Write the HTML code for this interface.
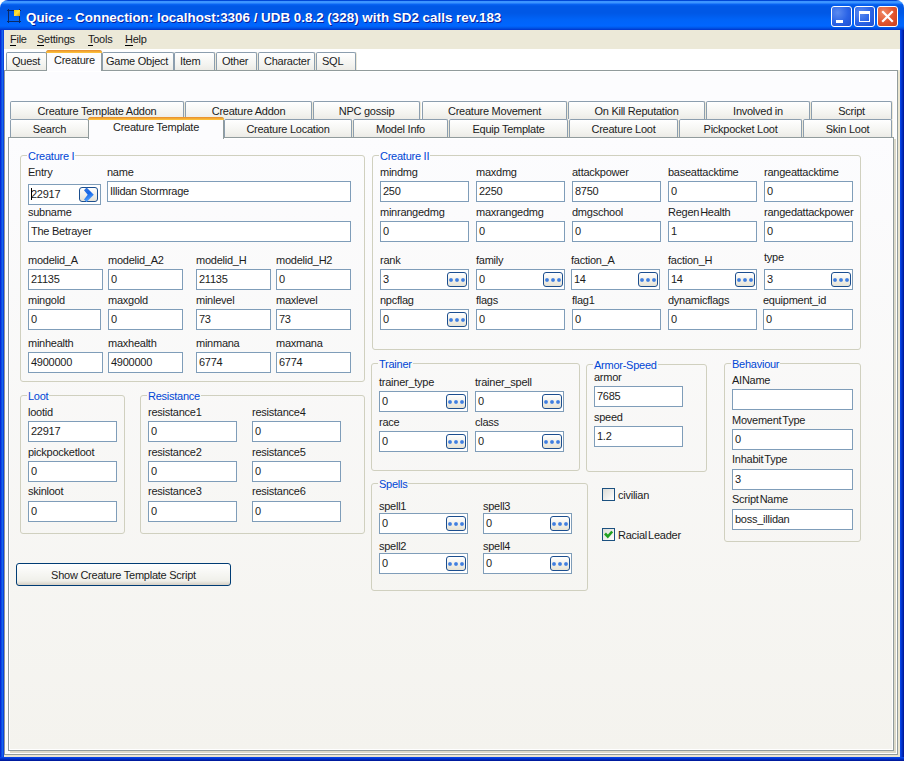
<!DOCTYPE html><html><head><meta charset="utf-8"><style>
*{margin:0;padding:0;box-sizing:border-box}
html,body{width:904px;height:761px;overflow:hidden;background:#FFFFFF}
body{position:relative;font-family:"Liberation Sans",sans-serif;font-size:11px;color:#1C1C1C}
div,i,b,span{position:absolute;display:block}
.lbl{line-height:13px;white-space:nowrap;letter-spacing:-0.25px}
.tb{background:#fff;border:1px solid #7F9DB9}
.tb span{left:2px;line-height:13px;white-space:nowrap;letter-spacing:-0.25px}
.db{width:20px;height:15px;border:1px solid #1C4E8E;border-radius:3px;background:linear-gradient(#fff,#E6E3D6)}
.db b{width:4px;height:4px;border-radius:2px;background:radial-gradient(circle,#3F7EDF 45%,#8FB4EC 100%);top:4.5px}
.db b:nth-child(1){left:0.5px}.db b:nth-child(2){left:6.5px}.db b:nth-child(3){left:12.5px}
.grp{border:1px solid #D0D0BF;border-radius:3px}
.gt{line-height:13px;color:#0046D5;padding:0 1px;white-space:nowrap;letter-spacing:-0.25px}
.tab{box-shadow:1px 0 0 #ECE8D8;border:1px solid #8C9EAE;border-bottom:none;border-radius:2px 2px 0 0;background:linear-gradient(#FFFFFF,#F3F3EF 70%,#ECEBE6);line-height:13px;white-space:nowrap;letter-spacing:-0.25px}
.tab span{width:100%;text-align:center}
.tsel{border:1px solid #919B9C;border-bottom:none;border-radius:3px 3px 0 0;background:#FCFCFE;line-height:13px;white-space:nowrap;letter-spacing:-0.25px}
.tsel:before{content:"";position:absolute;left:-1px;right:-1px;top:-1px;height:3px;background:linear-gradient(#E68B2C,#FFC73C);border-radius:3px 3px 0 0}
em{font-style:normal;padding-left:1px}
.mi{line-height:13px;white-space:nowrap;letter-spacing:-0.25px}
.mi u{text-decoration:none;border-bottom:1px solid #000}
</style></head><body>

<div style="left:0;top:10px;width:904px;height:751px;background:#0831D9"></div>
<div style="left:0;top:10px;width:4px;height:751px;background:linear-gradient(90deg,#0019CF,#166AEE 60%,#0831D9)"></div>
<div style="left:900px;top:10px;width:4px;height:751px;background:linear-gradient(90deg,#0A4AEE,#0030C8 50%,#001490)"></div>
<div style="left:0;top:757px;width:904px;height:4px;background:linear-gradient(#0A4AEE,#0030C8 50%,#001490)"></div>
<div style="left:0;top:0;width:904px;height:30px;border-radius:8px 8px 0 0;background:linear-gradient(#0047D6 0px,#0047D6 1px,#3D95FF 1px,#3D95FF 3px,#0A66F5 4px,#0058E6 6px,#0058E6 13px,#0064F8 20px,#0066FF 26px,#0055E5 28px,#0033CC 30px)"></div>
<div style="left:8px;top:9px;width:1px;height:14px;background:#0A2A66"></div><div style="left:19px;top:9px;width:1px;height:14px;background:#0A2A66"></div><div style="left:7px;top:10px;width:14px;height:1px;background:#0A2A66"></div><div style="left:7px;top:21px;width:14px;height:1px;background:#0A2A66"></div>
<div style="left:14px;top:10px;width:6px;height:6px;background:linear-gradient(135deg,#F8C800,#FFE040 50%,#D89A00)"></div>
<div style="left:26px;top:7px;line-height:22px;font-size:13.4px;font-weight:bold;color:#fff;white-space:nowrap;text-shadow:1px 1px 0 #0A1E9B">Quice - Connection: localhost:3306 / UDB 0.8.2 (328) with SD2 calls rev.183</div>
<div style="left:831px;top:6px;width:21px;height:21px;border:1px solid #fff;border-radius:3px;background:radial-gradient(circle at 30% 30%,#5B8BF0,#2A63E6 55%,#1F4FD0)"></div>
<div style="left:854px;top:6px;width:21px;height:21px;border:1px solid #fff;border-radius:3px;background:radial-gradient(circle at 30% 30%,#5B8BF0,#2A63E6 55%,#1F4FD0)"></div>
<div style="left:877px;top:6px;width:21px;height:21px;border:1px solid #fff;border-radius:3px;background:radial-gradient(circle at 30% 30%,#F08A66,#E0532C 55%,#C8401E)"></div>
<div style="left:836px;top:20px;width:7px;height:3px;background:#fff"></div>
<div style="left:859px;top:11px;width:11px;height:11px;border:1px solid #fff;border-top-width:3px"></div>
<svg style="position:absolute;left:877px;top:6px" width="21" height="21"><path d="M6 6L15 15M15 6L6 15" stroke="#fff" stroke-width="2.2" stroke-linecap="square"/></svg>
<div style="left:4px;top:30px;width:896px;height:19px;background:#ECE9D8"></div>
<div class="mi" style="left:10px;top:33px"><u>F</u>ile</div>
<div class="mi" style="left:37px;top:33px"><u>S</u>ettings</div>
<div class="mi" style="left:88px;top:33px"><u>T</u>ools</div>
<div class="mi" style="left:125px;top:33px"><u>H</u>elp</div>
<div style="left:4px;top:49px;width:896px;height:708px;background:#ECE9D8"></div>
<div style="left:4px;top:49px;width:896px;height:21px;background:#FFFFFF"></div>
<div style="left:4px;top:70px;width:894px;height:685px;border:1px solid #919B9C;background:#FCFCFE;box-shadow:inset 1px 1px #fff,inset -1px -1px #fff,2px 2px 0 #EAE5D0"></div>
<div class="tab" style="left:6px;top:52px;width:41px;height:18px"><span style="left:5px;top:2px;width:auto;text-align:left">Quest</span></div>
<div class="tab" style="left:102px;top:52px;width:72px;height:18px"><span style="left:3px;top:2px;width:auto;text-align:left">Game Object</span></div>
<div class="tab" style="left:174px;top:52px;width:41px;height:18px"><span style="left:5px;top:2px;width:auto;text-align:left">Item</span></div>
<div class="tab" style="left:216px;top:52px;width:41px;height:18px"><span style="left:5px;top:2px;width:auto;text-align:left">Other</span></div>
<div class="tab" style="left:258px;top:52px;width:57px;height:18px"><span style="left:5px;top:2px;width:auto;text-align:left">Character</span></div>
<div class="tab" style="left:316px;top:52px;width:40px;height:18px"><span style="left:5px;top:2px;width:auto;text-align:left">SQL</span></div>
<div class="tsel" style="left:46px;top:50px;width:56px;height:21px"><span style="left:7px;top:3px">Creature</span></div>
<div class="tab" style="left:10px;top:101px;width:174px;height:18px"><span style="top:3px">Creature Template Addon</span></div>
<div class="tab" style="left:185px;top:101px;width:127px;height:18px"><span style="top:3px">Creature Addon</span></div>
<div class="tab" style="left:313px;top:101px;width:107px;height:18px"><span style="top:3px">NPC gossip</span></div>
<div class="tab" style="left:422px;top:101px;width:145px;height:18px"><span style="top:3px">Creature Movement</span></div>
<div class="tab" style="left:568px;top:101px;width:137px;height:18px"><span style="top:3px">On Kill Reputation</span></div>
<div class="tab" style="left:706px;top:101px;width:104px;height:18px"><span style="top:3px">Involved in</span></div>
<div class="tab" style="left:811px;top:101px;width:81px;height:18px"><span style="top:3px">Script</span></div>
<div style="left:8px;top:137px;width:886px;height:614px;border:1px solid #919B9C;background:linear-gradient(#FCFCFE,#F4F3EE);box-shadow:inset 1px 1px #fff,inset -1px -1px #fff,2px 2px 0 #DCD9C9"></div>
<div class="tab" style="left:10px;top:119px;width:79px;height:18px"><span style="top:3px">Search</span></div>
<div class="tab" style="left:224px;top:119px;width:128px;height:18px"><span style="top:3px">Creature Location</span></div>
<div class="tab" style="left:353px;top:119px;width:95px;height:18px"><span style="top:3px">Model Info</span></div>
<div class="tab" style="left:449px;top:119px;width:119px;height:18px"><span style="top:3px">Equip Template</span></div>
<div class="tab" style="left:569px;top:119px;width:109px;height:18px"><span style="top:3px">Creature Loot</span></div>
<div class="tab" style="left:679px;top:119px;width:123px;height:18px"><span style="top:3px">Pickpocket Loot</span></div>
<div class="tab" style="left:803px;top:119px;width:89px;height:18px"><span style="top:3px">Skin Loot</span></div>
<div class="tsel" style="left:88px;top:117px;width:136px;height:22px"><span style="left:0;width:100%;text-align:center;top:3px">Creature Template</span></div>
<div class="grp" style="left:20px;top:155px;width:345px;height:227px"></div>
<div class="gt" style="left:27px;top:150px;background:#FCFCFE">Creature I</div>
<div class="lbl" style="left:28px;top:166px;">Entry</div>
<div class="lbl" style="left:107px;top:166px;">name</div>
<div class="tb" style="left:28px;top:184px;width:73px;height:21px"><span style="top:3px">22917</span><div style="left:2px;top:3px;width:1px;height:12px;background:#000"></div><div style="left:50px;top:2px;width:19px;height:15px;border:1px solid #1C4E8E;border-radius:3px;background:linear-gradient(#fff,#E3E1D6)"><svg style="position:absolute;left:0;top:0;overflow:visible" width="17" height="13"><defs><linearGradient id="cg" x1="0" y1="0" x2="0.3" y2="1"><stop offset="0" stop-color="#3C78D8"/><stop offset="0.5" stop-color="#1466E8"/><stop offset="1" stop-color="#5AA8FF"/></linearGradient></defs><path d="M4 2.2L6.6 -0.4L13.8 6.85L6.6 14L4 11.5L7.7 6.85Z" fill="url(#cg)"/></svg></div></div>
<div class="tb" style="left:107px;top:181px;width:244px;height:21px"><span style="top:3px">Illidan Stormrage</span>
</div>
<div class="lbl" style="left:28px;top:206px;">subname</div>
<div class="tb" style="left:28px;top:221px;width:323px;height:21px"><span style="top:3px">The Betrayer</span>
</div>
<div class="lbl" style="left:28px;top:254px;">modelid_A</div>
<div class="tb" style="left:28px;top:269px;width:75px;height:21px"><span style="top:3px">21135</span>
</div>
<div class="lbl" style="left:108px;top:254px;">modelid_A2</div>
<div class="tb" style="left:108px;top:269px;width:75px;height:21px"><span style="top:3px">0</span>
</div>
<div class="lbl" style="left:196px;top:254px;">modelid_H</div>
<div class="tb" style="left:196px;top:269px;width:75px;height:21px"><span style="top:3px">21135</span>
</div>
<div class="lbl" style="left:276px;top:254px;">modelid_H2</div>
<div class="tb" style="left:276px;top:269px;width:75px;height:21px"><span style="top:3px">0</span>
</div>
<div class="lbl" style="left:28px;top:294px;">mingold</div>
<div class="tb" style="left:28px;top:309px;width:73px;height:21px"><span style="top:3px">0</span>
</div>
<div class="lbl" style="left:108px;top:294px;">maxgold</div>
<div class="tb" style="left:108px;top:309px;width:75px;height:21px"><span style="top:3px">0</span>
</div>
<div class="lbl" style="left:196px;top:294px;">minlevel</div>
<div class="tb" style="left:196px;top:309px;width:75px;height:21px"><span style="top:3px">73</span>
</div>
<div class="lbl" style="left:276px;top:294px;">maxlevel</div>
<div class="tb" style="left:276px;top:309px;width:75px;height:21px"><span style="top:3px">73</span>
</div>
<div class="lbl" style="left:28px;top:337px;">minhealth</div>
<div class="tb" style="left:28px;top:352px;width:75px;height:21px"><span style="top:3px">4900000</span>
</div>
<div class="lbl" style="left:108px;top:337px;">maxhealth</div>
<div class="tb" style="left:108px;top:352px;width:75px;height:21px"><span style="top:3px">4900000</span>
</div>
<div class="lbl" style="left:196px;top:337px;">minmana</div>
<div class="tb" style="left:196px;top:352px;width:75px;height:21px"><span style="top:3px">6774</span>
</div>
<div class="lbl" style="left:276px;top:337px;">maxmana</div>
<div class="tb" style="left:276px;top:352px;width:75px;height:21px"><span style="top:3px">6774</span>
</div>
<div class="grp" style="left:372px;top:155px;width:489px;height:195px"></div>
<div class="gt" style="left:379px;top:150px;background:#FCFCFE">Creature II</div>
<div class="lbl" style="left:380px;top:166px;">mindmg</div>
<div class="tb" style="left:380px;top:181px;width:89px;height:21px"><span style="top:3px">250</span>
</div>
<div class="lbl" style="left:476px;top:166px;">maxdmg</div>
<div class="tb" style="left:476px;top:181px;width:89px;height:21px"><span style="top:3px">2250</span>
</div>
<div class="lbl" style="left:572px;top:166px;">attackpower</div>
<div class="tb" style="left:572px;top:181px;width:89px;height:21px"><span style="top:3px">8750</span>
</div>
<div class="lbl" style="left:668px;top:166px;">baseattacktime</div>
<div class="tb" style="left:668px;top:181px;width:89px;height:21px"><span style="top:3px">0</span>
</div>
<div class="lbl" style="left:764px;top:166px;">rangeattacktime</div>
<div class="tb" style="left:764px;top:181px;width:89px;height:21px"><span style="top:3px">0</span>
</div>
<div class="lbl" style="left:380px;top:206px;">minrangedmg</div>
<div class="tb" style="left:380px;top:221px;width:89px;height:21px"><span style="top:3px">0</span>
</div>
<div class="lbl" style="left:476px;top:206px;">maxrangedmg</div>
<div class="tb" style="left:476px;top:221px;width:89px;height:21px"><span style="top:3px">0</span>
</div>
<div class="lbl" style="left:572px;top:206px;">dmgschool</div>
<div class="tb" style="left:572px;top:221px;width:89px;height:21px"><span style="top:3px">0</span>
</div>
<div class="lbl" style="left:668px;top:206px;">Regen<em>Health</em></div>
<div class="tb" style="left:668px;top:221px;width:89px;height:21px"><span style="top:3px">1</span>
</div>
<div class="lbl" style="left:764px;top:206px;">rangedattackpower</div>
<div class="tb" style="left:764px;top:221px;width:89px;height:21px"><span style="top:3px">0</span>
</div>
<div class="lbl" style="left:380px;top:254px;">rank</div>
<div class="tb" style="left:380px;top:269px;width:89px;height:21px"><span style="top:3px">3</span>
<i class="db" style="left:66px;top:2px"><b></b><b></b><b></b></i>
</div>
<div class="lbl" style="left:476px;top:254px;">family</div>
<div class="tb" style="left:476px;top:269px;width:89px;height:21px"><span style="top:3px">0</span>
<i class="db" style="left:66px;top:2px"><b></b><b></b><b></b></i>
</div>
<div class="lbl" style="left:571px;top:254px;">faction_A</div>
<div class="tb" style="left:571px;top:269px;width:89px;height:21px"><span style="top:3px">14</span>
<i class="db" style="left:66px;top:2px"><b></b><b></b><b></b></i>
</div>
<div class="lbl" style="left:668px;top:254px;">faction_H</div>
<div class="tb" style="left:668px;top:269px;width:89px;height:21px"><span style="top:3px">14</span>
<i class="db" style="left:66px;top:2px"><b></b><b></b><b></b></i>
</div>
<div class="lbl" style="left:764px;top:251px;">type</div>
<div class="tb" style="left:764px;top:269px;width:89px;height:21px"><span style="top:3px">3</span>
<i class="db" style="left:66px;top:2px"><b></b><b></b><b></b></i>
</div>
<div class="lbl" style="left:380px;top:294px;">npcflag</div>
<div class="tb" style="left:380px;top:309px;width:89px;height:21px"><span style="top:3px">0</span>
<i class="db" style="left:66px;top:2px"><b></b><b></b><b></b></i>
</div>
<div class="lbl" style="left:476px;top:294px;">flags</div>
<div class="tb" style="left:476px;top:309px;width:89px;height:21px"><span style="top:3px">0</span>
</div>
<div class="lbl" style="left:572px;top:294px;">flag1</div>
<div class="tb" style="left:572px;top:309px;width:89px;height:21px"><span style="top:3px">0</span>
</div>
<div class="lbl" style="left:668px;top:294px;">dynamicflags</div>
<div class="tb" style="left:668px;top:309px;width:89px;height:21px"><span style="top:3px">0</span>
</div>
<div class="lbl" style="left:763px;top:294px;">equipment_id</div>
<div class="tb" style="left:763px;top:309px;width:90px;height:21px"><span style="top:3px">0</span>
</div>
<div class="grp" style="left:371px;top:363px;width:209px;height:108px"></div>
<div class="gt" style="left:378px;top:358px;background:#F9F9F8">Trainer</div>
<div class="lbl" style="left:379px;top:376px;">trainer_type</div>
<div class="tb" style="left:379px;top:391px;width:89px;height:21px"><span style="top:3px">0</span>
<i class="db" style="left:66px;top:2px"><b></b><b></b><b></b></i>
</div>
<div class="lbl" style="left:475px;top:376px;">trainer_spell</div>
<div class="tb" style="left:475px;top:391px;width:89px;height:21px"><span style="top:3px">0</span>
<i class="db" style="left:66px;top:2px"><b></b><b></b><b></b></i>
</div>
<div class="lbl" style="left:379px;top:416px;">race</div>
<div class="tb" style="left:379px;top:431px;width:89px;height:21px"><span style="top:3px">0</span>
<i class="db" style="left:66px;top:2px"><b></b><b></b><b></b></i>
</div>
<div class="lbl" style="left:475px;top:416px;">class</div>
<div class="tb" style="left:475px;top:431px;width:89px;height:21px"><span style="top:3px">0</span>
<i class="db" style="left:66px;top:2px"><b></b><b></b><b></b></i>
</div>
<div class="grp" style="left:586px;top:364px;width:121px;height:108px"></div>
<div class="gt" style="left:593px;top:359px;background:#F9F9F8">Armor-Speed</div>
<div class="lbl" style="left:594px;top:371px;">armor</div>
<div class="tb" style="left:594px;top:386px;width:89px;height:21px"><span style="top:3px">7685</span>
</div>
<div class="lbl" style="left:594px;top:411px;">speed</div>
<div class="tb" style="left:594px;top:426px;width:89px;height:21px"><span style="top:3px">1.2</span>
</div>
<div class="grp" style="left:724px;top:363px;width:137px;height:179px"></div>
<div class="gt" style="left:731px;top:358px;background:#F9F9F8">Behaviour</div>
<div class="lbl" style="left:732px;top:374px;">AIName</div>
<div class="tb" style="left:732px;top:389px;width:121px;height:21px"><span style="top:3px"></span>
</div>
<div class="lbl" style="left:732px;top:414px;">Movement<em>Type</em></div>
<div class="tb" style="left:732px;top:429px;width:121px;height:21px"><span style="top:3px">0</span>
</div>
<div class="lbl" style="left:732px;top:453px;">Inhabit<em>Type</em></div>
<div class="tb" style="left:732px;top:469px;width:121px;height:21px"><span style="top:3px">3</span>
</div>
<div class="lbl" style="left:732px;top:493px;">Script<em>Name</em></div>
<div class="tb" style="left:732px;top:509px;width:121px;height:21px"><span style="top:3px">boss_illidan</span>
</div>
<div class="grp" style="left:371px;top:483px;width:217px;height:108px"></div>
<div class="gt" style="left:378px;top:478px;background:#F7F7F5">Spells</div>
<div class="lbl" style="left:379px;top:500px;">spell1</div>
<div class="tb" style="left:379px;top:513px;width:89px;height:21px"><span style="top:3px">0</span>
<i class="db" style="left:66px;top:2px"><b></b><b></b><b></b></i>
</div>
<div class="lbl" style="left:483px;top:500px;">spell3</div>
<div class="tb" style="left:483px;top:513px;width:89px;height:21px"><span style="top:3px">0</span>
<i class="db" style="left:66px;top:2px"><b></b><b></b><b></b></i>
</div>
<div class="lbl" style="left:379px;top:540px;">spell2</div>
<div class="tb" style="left:379px;top:553px;width:89px;height:21px"><span style="top:3px">0</span>
<i class="db" style="left:66px;top:2px"><b></b><b></b><b></b></i>
</div>
<div class="lbl" style="left:483px;top:540px;">spell4</div>
<div class="tb" style="left:483px;top:553px;width:89px;height:21px"><span style="top:3px">0</span>
<i class="db" style="left:66px;top:2px"><b></b><b></b><b></b></i>
</div>
<div style="left:602px;top:488px;width:13px;height:13px;border:1px solid #1C5180;background:linear-gradient(135deg,#DCDCD7,#FFFFFF)"></div>
<div class="lbl" style="left:618px;top:489px;">civilian</div>
<div style="left:602px;top:528px;width:13px;height:13px;border:1px solid #1C5180;background:linear-gradient(135deg,#DCDCD7,#FFFFFF)"></div>
<svg style="position:absolute;left:602px;top:528px" width="13" height="13"><path d="M3 5.5L5.8 8.5L10.2 3.5" stroke="#21A121" stroke-width="2.6" fill="none"/></svg>
<div class="lbl" style="left:618px;top:529px;">Racial<em>Leader</em></div>
<div class="grp" style="left:20px;top:395px;width:105px;height:139px"></div>
<div class="gt" style="left:27px;top:390px;background:#F9F8F7">Loot</div>
<div class="lbl" style="left:28px;top:406px;">lootid</div>
<div class="tb" style="left:28px;top:421px;width:89px;height:21px"><span style="top:3px">22917</span>
</div>
<div class="lbl" style="left:28px;top:446px;">pickpocketloot</div>
<div class="tb" style="left:28px;top:461px;width:89px;height:21px"><span style="top:3px">0</span>
</div>
<div class="lbl" style="left:28px;top:485px;">skinloot</div>
<div class="tb" style="left:28px;top:501px;width:89px;height:21px"><span style="top:3px">0</span>
</div>
<div class="grp" style="left:140px;top:395px;width:225px;height:139px"></div>
<div class="gt" style="left:147px;top:390px;background:#F9F8F7">Resistance</div>
<div class="lbl" style="left:148px;top:406px;">resistance1</div>
<div class="tb" style="left:148px;top:421px;width:89px;height:21px"><span style="top:3px">0</span>
</div>
<div class="lbl" style="left:252px;top:406px;">resistance4</div>
<div class="tb" style="left:252px;top:421px;width:89px;height:21px"><span style="top:3px">0</span>
</div>
<div class="lbl" style="left:148px;top:446px;">resistance2</div>
<div class="tb" style="left:148px;top:461px;width:89px;height:21px"><span style="top:3px">0</span>
</div>
<div class="lbl" style="left:252px;top:446px;">resistance5</div>
<div class="tb" style="left:252px;top:461px;width:89px;height:21px"><span style="top:3px">0</span>
</div>
<div class="lbl" style="left:148px;top:485px;">resistance3</div>
<div class="tb" style="left:148px;top:501px;width:89px;height:21px"><span style="top:3px">0</span>
</div>
<div class="lbl" style="left:252px;top:485px;">resistance6</div>
<div class="tb" style="left:252px;top:501px;width:89px;height:21px"><span style="top:3px">0</span>
</div>
<div style="left:16px;top:563px;width:215px;height:23px;border:1px solid #003C74;border-radius:3px;background:linear-gradient(#FFFFFF,#F0F0EA 80%,#D6D0C5)"><span class="lbl" style="left:0;width:100%;text-align:center;top:5px">Show Creature Template Script</span></div>
</body></html>
